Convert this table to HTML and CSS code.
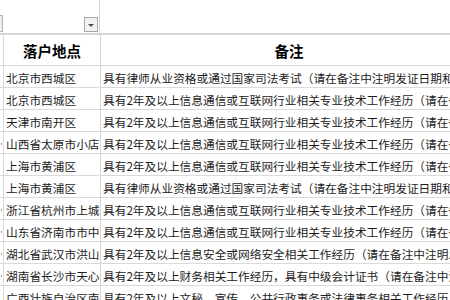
FILE: index.html
```html
<!DOCTYPE html>
<html lang="zh-CN">
<head>
<meta charset="utf-8">
<link rel="stylesheet" href="styles.css">
</head>
<body>
<div class="sheet">
  <div class="row filter">
    <div class="c0"><span class="stub"></span></div>
    <div class="c1"><span class="dd"><span class="tri"></span></span></div>
    <div class="c2"></div>
  </div>
  <div class="row head">
    <div class="c0"></div>
    <div class="c1">落户地点</div>
    <div class="c2">备注</div>
  </div>
  <div class="row"><div class="c0"></div><div class="c1">北京市西城区</div><div class="c2">具有律师从业资格或通过国家司法考试（请在备注中注明发证日期和</div></div>
  <div class="row"><div class="c0"></div><div class="c1">北京市西城区</div><div class="c2">具有2年及以上信息通信或互联网行业相关专业技术工作经历（请在备注中注明</div></div>
  <div class="row"><div class="c0"></div><div class="c1">天津市南开区</div><div class="c2">具有2年及以上信息通信或互联网行业相关专业技术工作经历（请在备注中注明</div></div>
  <div class="row"><div class="c0"><span class="dot"></span></div><div class="c1">山西省太原市小店区</div><div class="c2">具有2年及以上信息通信或互联网行业相关专业技术工作经历（请在备注中注明</div></div>
  <div class="row"><div class="c0"></div><div class="c1">上海市黄浦区</div><div class="c2">具有2年及以上信息通信或互联网行业相关专业技术工作经历（请在备注中注明</div></div>
  <div class="row"><div class="c0"></div><div class="c1">上海市黄浦区</div><div class="c2">具有律师从业资格或通过国家司法考试（请在备注中注明发证日期和</div></div>
  <div class="row"><div class="c0"><span class="dot"></span></div><div class="c1">浙江省杭州市上城区</div><div class="c2">具有2年及以上信息通信或互联网行业相关专业技术工作经历（请在备注中注明</div></div>
  <div class="row"><div class="c0"><span class="dot"></span></div><div class="c1">山东省济南市市中区</div><div class="c2">具有2年及以上信息通信或互联网行业相关专业技术工作经历（请在备注中注明</div></div>
  <div class="row"><div class="c0"><span class="dot"></span></div><div class="c1">湖北省武汉市洪山区</div><div class="c2">具有2年及以上信息安全或网络安全相关工作经历（请在备注中注明发证日期</div></div>
  <div class="row"><div class="c0"><span class="dot"></span></div><div class="c1">湖南省长沙市天心区</div><div class="c2">具有2年及以上财务相关工作经历，具有中级会计证书（请在备注中注明</div></div>
  <div class="row"><div class="c0"></div><div class="c1">广西壮族自治区南宁市</div><div class="c2">具有2年及以上文秘、宣传、公共行政事务或法律事务相关工作经历</div></div>
</div>
</body>
</html>
```
FILE: styles.css
```css
html, body {
  margin: 0;
  padding: 0;
  background: #ffffff;
}
.sheet {
  width: 450px;
  height: 300px;
  overflow: hidden;
  font-family: "Noto Sans CJK SC", "Noto Sans", sans-serif;
  font-size: 11.7px;
  color: #1c1c1c;
}
.row {
  display: flex;
  height: 21px;
  border-bottom: 1px solid #dadada;
}
.c0, .c1, .c2 {
  flex: none;
  display: flex;
  align-items: flex-end;
  white-space: nowrap;
  overflow: hidden;
  line-height: 17px;
  padding-bottom: 1px;
}
.c0 {
  width: 3px;
  border-right: 1px solid #dadada;
  position: relative;
}
.c1 {
  width: 94px;
  padding-left: 2px;
  border-right: 1px solid #d4d4d4;
}
.c2 {
  width: 372px;
  padding-left: 2px;
}
.filter {
  height: 33px;
  border-bottom: 2px solid #d6d6d6;
}
.filter .c0 {
  border-right: none;
  padding-bottom: 0;
}
.filter .c1 {
  justify-content: flex-end;
  padding-bottom: 1px;
}
.stub {
  display: block;
  width: 2px;
  height: 15px;
  margin-bottom: 1px;
  border: 1px solid #b4b4b4;
  border-left: none;
  background: #eeeeee;
}
.dd {
  display: flex;
  align-items: center;
  justify-content: center;
  width: 12px;
  height: 13px;
  margin-right: 1px;
  border: 1px solid #a8a8a8;
  background: #f1f1f1;
}
.tri {
  width: 0;
  height: 0;
  border-left: 3px solid transparent;
  border-right: 3px solid transparent;
  border-top: 3px solid #505050;
  margin-top: 1px;
}
.head {
  height: 30px;
}
.head .c1, .head .c2 {
  justify-content: center;
  align-items: center;
  font-weight: bold;
  font-size: 14.5px;
  color: #000;
  padding-bottom: 0;
}
.head .c1 {
  padding-left: 1px;
  padding-right: 1px;
}
.dot {
  position: absolute;
  left: 1px;
  bottom: 8px;
  width: 1px;
  height: 2px;
  background: #9a9a9a;
}
```
